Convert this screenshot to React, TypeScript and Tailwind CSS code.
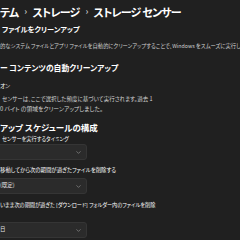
import { ChevronDown } from "lucide-react"

const font = {
  fontFamily: '"Noto Sans CJK JP", "Noto Sans", sans-serif',
}

function Dropdown({ value }: { value?: string }) {
  return (
    <div className="-ml-[20px] flex h-[16px] w-[107px] items-center justify-between rounded-[3px] border border-[#353535] bg-[#2b2b2b] pl-[19px] pr-[4px]">
      <span className="whitespace-nowrap text-[5.5px] leading-none text-[#e4e4e4]">{value}</span>
      <ChevronDown size={7} strokeWidth={1.6} className="text-[#bdbdbd]" />
    </div>
  )
}

export default function App() {
  return (
    <div
      className="h-[240px] w-[240px] overflow-hidden bg-[#202020] text-white [font-feature-settings:'palt']"
      style={font}
    >
      <div className="flex flex-col">
        <div className="mt-[4px] flex items-center gap-[6px] whitespace-nowrap text-[11px] font-semibold leading-[16px] tracking-[-0.8px]">
          <span>テム</span>
          <span className="text-[9px] text-[#bdbdbd]">›</span>
          <span>ストレージ</span>
          <span className="text-[9px] text-[#bdbdbd]">›</span>
          <span>ストレージ センサー</span>
        </div>

        <div className="mt-[3px] whitespace-nowrap pl-[2px] text-[7.2px] font-bold leading-[12px]">
          ファイルをクリーンアップ
        </div>
        <div className="mt-[6px] whitespace-nowrap text-[5.3px] leading-[10px] text-[#d2d2d2]">
          的なシステム ファイルとアプリ ファイルを自動的にクリーンアップすることで、Windows をスムーズに実行し続けます。
        </div>

        <div className="mt-[11px] whitespace-nowrap text-[7.8px] font-bold leading-[12px]">
          ー コンテンツの自動クリーンアップ
        </div>
        <div className="mt-[7px] whitespace-nowrap text-[5.6px] leading-[10px]">オン</div>
        <div className="mt-[4px] whitespace-nowrap pl-[2px] text-[5.5px] leading-[9px] text-[#d2d2d2]">
          センサーは、ここで選択した頻度に基づいて実行されます。過去 1
        </div>
        <div className="whitespace-nowrap text-[5.8px] leading-[9px] text-[#d2d2d2]">
          0 バイト の領域をクリーンアップしました。
        </div>

        <div className="mt-[8px] whitespace-nowrap text-[8.5px] font-bold leading-[12px]">
          アップ スケジュールの構成
        </div>
        <div className="mt-[1px] whitespace-nowrap pl-[2px] text-[5.2px] leading-[9px]">
          センサーを実行するタイミング
        </div>
        <div className="mt-[1px]">
          <Dropdown />
        </div>

        <div className="mt-[6px] whitespace-nowrap text-[5.4px] leading-[9px]">
          移動してから次の期間が過ぎたファイルを削除する
        </div>
        <div className="mt-[3px]">
          <Dropdown value="(既定)" />
        </div>

        <div className="mt-[6px] whitespace-nowrap text-[5.2px] leading-[9px]">
          いまま次の期間が過ぎた [ダウンロード] フォルダー内のファイルを削除
        </div>
        <div className="mt-[13px]">
          <Dropdown value="日" />
        </div>
      </div>
    </div>
  )
}
